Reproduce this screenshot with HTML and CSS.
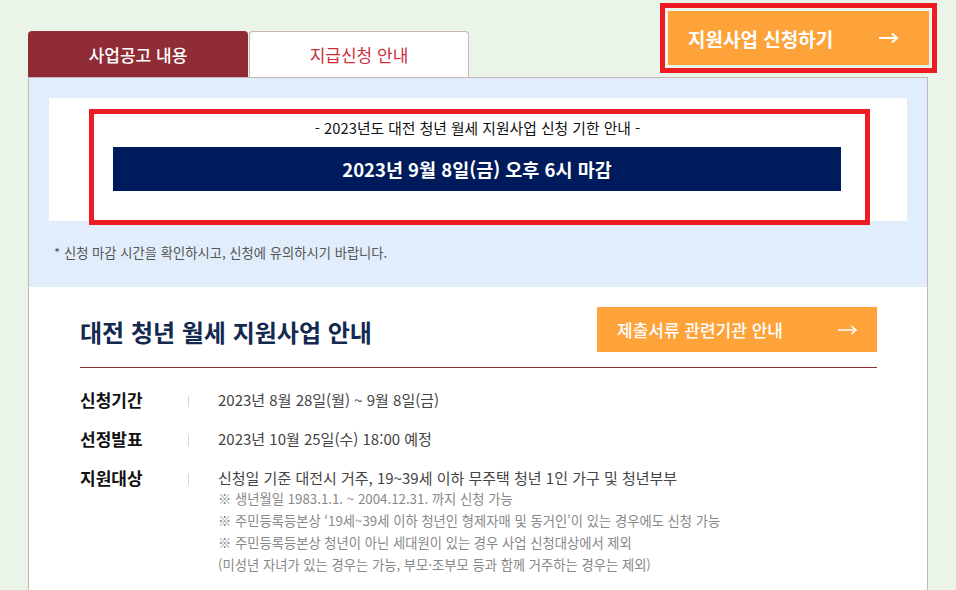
FILE: index.html
```html
<!DOCTYPE html>
<html lang="ko">
<head>
<meta charset="utf-8">
<title>대전 청년 월세 지원사업</title>
<link rel="stylesheet" href="styles.css">
</head>
<body>
<div class="wrap">
  <div class="top">
    <div class="tabs">
      <div class="tab tab-on">사업공고 내용</div>
      <div class="tab tab-off">지급신청 안내</div>
    </div>
    <div class="apply-outline">
      <a class="apply-btn" href="#">
        <span>지원사업 신청하기</span>
        <svg class="arrow" width="20" height="12" viewBox="0 0 20 12"><path d="M0 6H18M13 1.5L18 6L13 10.5" fill="none" stroke="#fff" stroke-width="2"/></svg>
      </a>
    </div>
  </div>
  <div class="panel">
    <div class="notice-area">
      <div class="notice-white">
        <div class="notice-red">
          <p class="notice-title">- 2023년도 대전 청년 월세 지원사업 신청 기한 안내 -</p>
          <div class="deadline">2023년 9월 8일(금) 오후 6시 마감</div>
        </div>
      </div>
      <p class="notice-note">* 신청 마감 시간을 확인하시고, 신청에 유의하시기 바랍니다.</p>
    </div>
    <div class="info">
      <div class="info-head">
        <h2 class="info-title">대전 청년 월세 지원사업 안내</h2>
        <a class="doc-btn" href="#">
          <span>제출서류 관련기관 안내</span>
          <svg class="arrow" width="20" height="12" viewBox="0 0 20 12"><path d="M0 6H18M13.5 2L18 6L13.5 10" fill="none" stroke="#fff" stroke-width="1.6"/></svg>
        </a>
      </div>
      <div class="rows">
        <div class="row">
          <div class="label">신청기간</div>
          <div class="sep"></div>
          <div class="value">2023년 8월 28일(월) ~ 9월 8일(금)</div>
        </div>
        <div class="row">
          <div class="label">선정발표</div>
          <div class="sep"></div>
          <div class="value">2023년 10월 25일(수) 18:00 예정</div>
        </div>
        <div class="row">
          <div class="label">지원대상</div>
          <div class="sep"></div>
          <div class="value">
            <div>신청일 기준 대전시 거주, 19~39세 이하 무주택 청년 1인 가구 및 청년부부</div>
            <div class="sub">※ 생년월일 1983.1.1. ~ 2004.12.31. 까지 신청 가능</div>
            <div class="sub">※ 주민등록등본상 ‘19세~39세 이하 청년인 형제자매 및 동거인’이 있는 경우에도 신청 가능</div>
            <div class="sub">※ 주민등록등본상 청년이 아닌 세대원이 있는 경우 사업 신청대상에서 제외</div>
            <div class="sub">(미성년 자녀가 있는 경우는 가능, 부모·조부모 등과 함께 거주하는 경우는 제외)</div>
          </div>
        </div>
      </div>
    </div>
  </div>
</div>
</body>
</html>
```

FILE: styles.css
```css
* { box-sizing: border-box; }
html, body { margin: 0; padding: 0; }
body {
  background: #eaf4e9;
  font-family: "Noto Sans CJK KR", "Noto Sans", sans-serif;
  color: #333;
  overflow: hidden;
}
p { margin: 0; }
a { text-decoration: none; }

.wrap {
  width: 900px;
  margin-left: 28px;
}

.top {
  display: flex;
  justify-content: space-between;
  height: 77px;
}
.tabs {
  display: flex;
  align-self: flex-end;
}
.tab {
  height: 46px;
  display: flex;
  align-items: center;
  justify-content: center;
  font-size: 17px;
  font-weight: 500;
  border-radius: 4px 4px 0 0;
}
.tab-on {
  width: 220px;
  background: #8f2c35;
  color: #fff;
}
.tab-off {
  width: 220px;
  margin-left: 1px;
  background: #fff;
  color: #c8303d;
  font-weight: 400;
  border: 1px solid #cdb3b6;
  border-bottom: none;
}

.apply-outline {
  align-self: flex-start;
  margin-top: 3px;
  margin-right: -9px;
  border: 5px solid #ed1c24;
  padding: 3px;
}
.apply-btn {
  width: 261px;
  height: 54px;
  background: #fea23a;
  color: #fff;
  display: flex;
  align-items: center;
  justify-content: space-between;
  padding: 0 30px 0 20px;
  font-size: 19px;
  font-weight: 700;
}
.arrow { display: block; }

.panel {
  border: 1px solid #c6b4b8;
  border-bottom: none;
  background: #fff;
}

.notice-area {
  background: #e1edfb;
  padding: 20px 20px 0;
  height: 209px;
}
.notice-white {
  background: #fff;
  height: 123px;
  padding-top: 11px;
}
.notice-red {
  width: 781px;
  height: 116px;
  margin-left: 40px;
  border: 5px solid #ed1c24;
  padding-top: 4px;
  background: #fff;
  position: relative;
}
.notice-title {
  text-align: center;
  font-size: 14.8px;
  line-height: 20px;
  color: #111;
  margin-left: -4px;
}
.deadline {
  width: 728px;
  height: 44px;
  margin: 9px 0 0 19px;
  background: #001b5c;
  color: #fff;
  font-size: 18.5px;
  font-weight: 700;
  display: flex;
  align-items: center;
  justify-content: center;
}
.notice-note {
  margin-top: 22px;
  padding-left: 5px;
  font-size: 13.3px;
  line-height: 20px;
  color: #555;
}

.info {
  padding: 20px 50px 40px 51px;
}
.info-head {
  display: flex;
  justify-content: space-between;
  align-items: center;
  height: 45px;
}
.info-title {
  margin: 0;
  font-size: 24px;
  font-weight: 700;
  color: #14294f;
  line-height: 30px;
  padding-top: 4px;
}
.doc-btn {
  width: 280px;
  height: 45px;
  background: #fea23a;
  color: #fff;
  display: flex;
  align-items: center;
  justify-content: space-between;
  padding: 0 19px 0 20px;
  font-size: 17px;
  font-weight: 500;
}

.rows {
  margin-top: 15px;
  border-top: 1px solid #8f2c35;
  padding-top: 22px;
}
.row {
  display: flex;
  align-items: flex-start;
  margin-bottom: 19px;
}
.label {
  width: 108px;
  font-size: 17px;
  font-weight: 700;
  color: #111;
  line-height: 20px;
}
.sep {
  width: 1px;
  height: 11px;
  margin-top: 6px;
  background: #d6d6d6;
}
.value {
  margin-left: 29px;
  font-size: 15px;
  line-height: 20px;
  color: #444;
}
.sub {
  font-size: 13.3px;
  line-height: 22px;
  color: #888;
}
```
